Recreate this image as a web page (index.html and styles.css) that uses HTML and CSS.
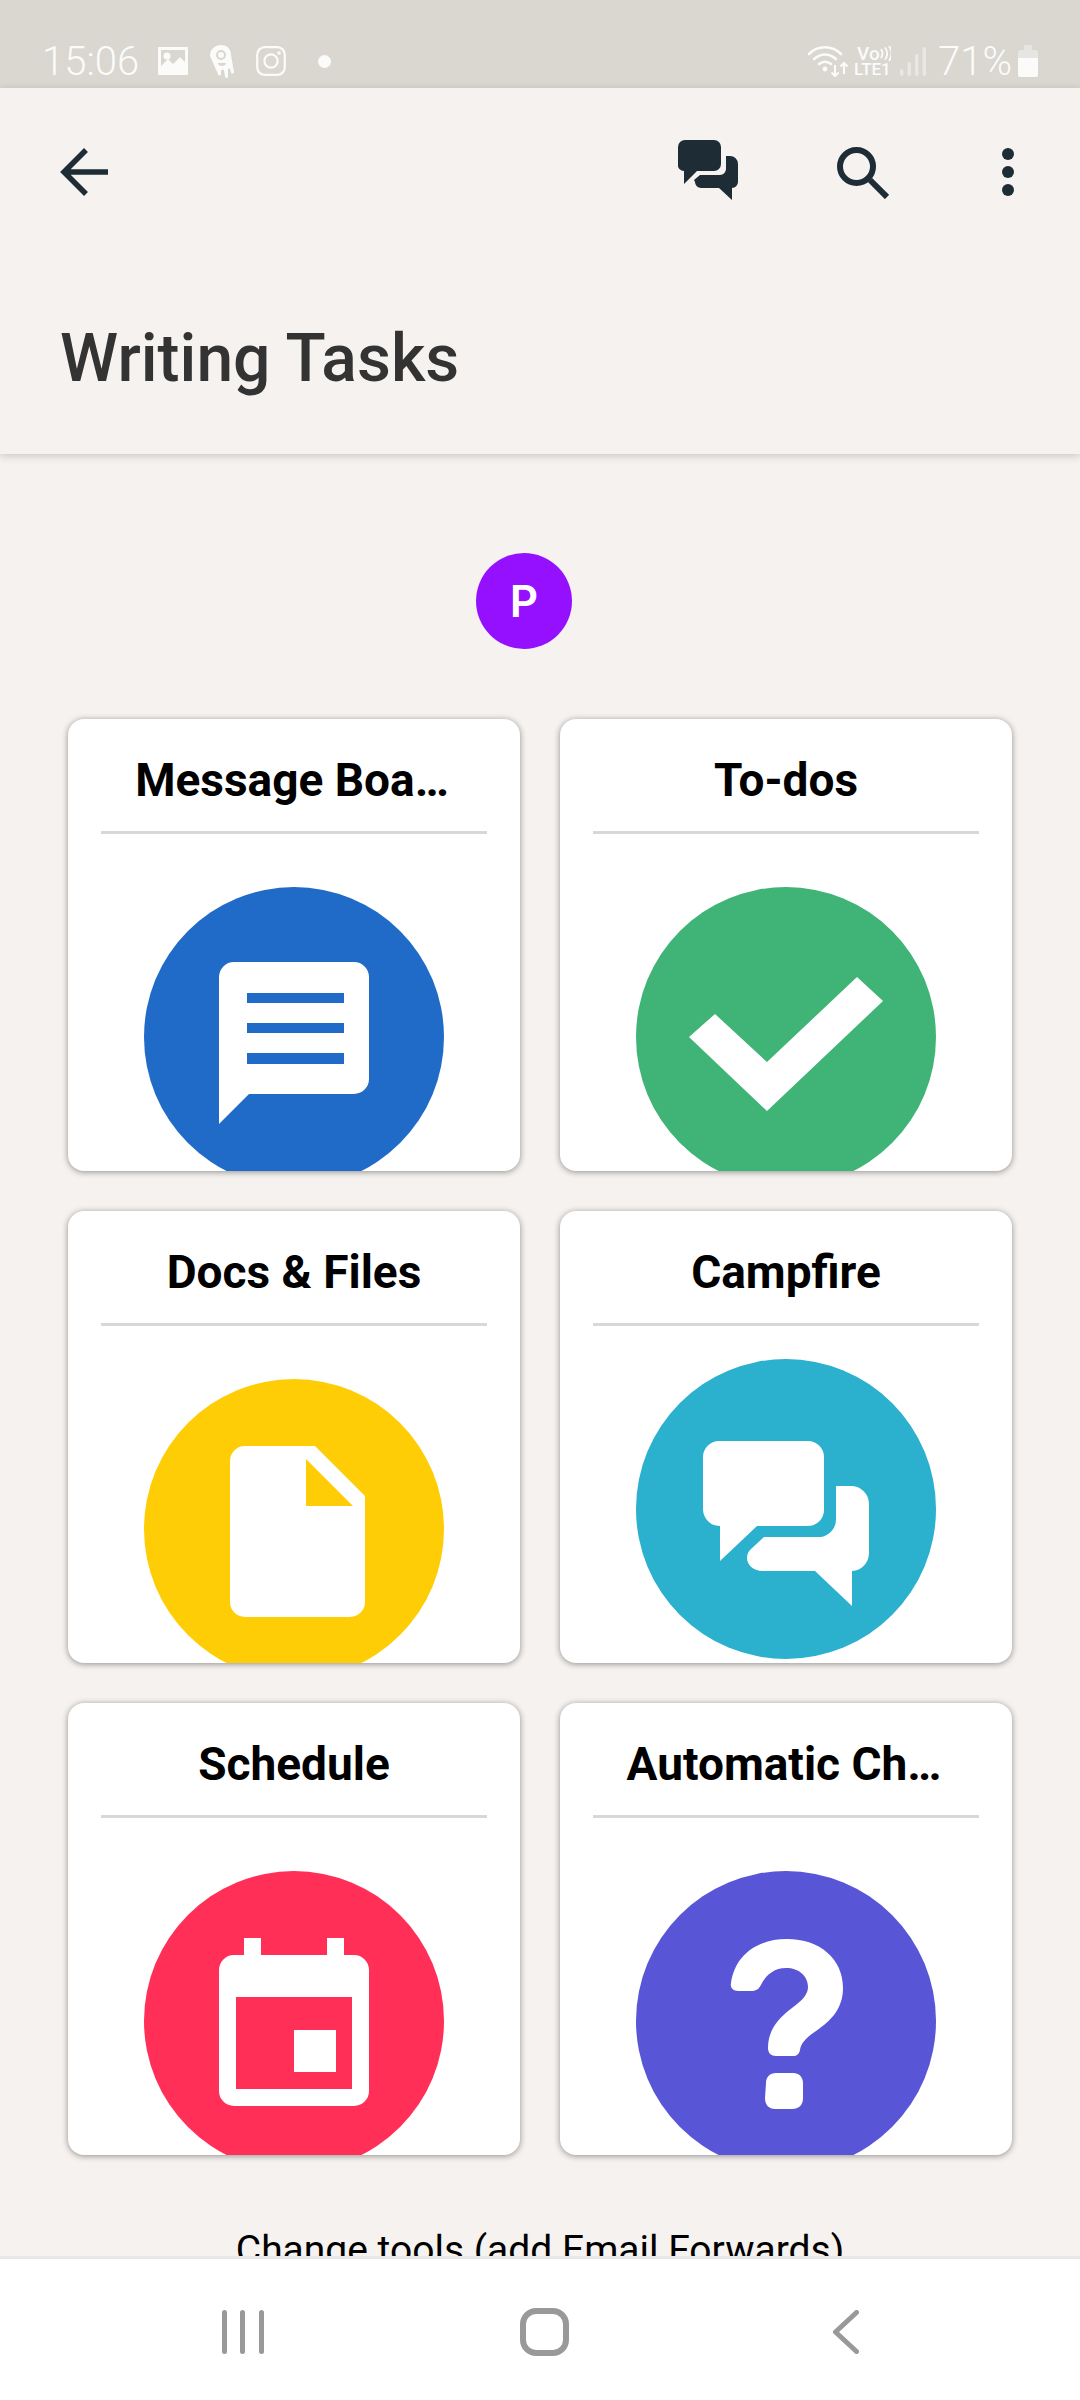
FILE: index.html
```html
<!DOCTYPE html>
<html lang="en">
<head>
  <meta charset="UTF-8">
  <meta name="viewport" content="width=device-width, initial-scale=1.0">
  <title>Writing Tasks</title>
  <link rel="stylesheet" href="styles.css">
</head>
<body>
  <div class="statusbar">
    <span class="clock">15:06</span>
    <svg class="st-image" width="30" height="28" viewBox="0 0 30 28">
      <path fill="#fbfbfa" fill-rule="evenodd" d="M1 0h28a1 1 0 0 1 1 1v26a1 1 0 0 1-1 1H1a1 1 0 0 1-1-1V1a1 1 0 0 1 1-1zM3 3v16l7-7 5 5 7-7 5 5V3z"/>
      <circle cx="9" cy="9" r="3.5" fill="#fbfbfa"/>
    </svg>
    <svg class="st-ghost" width="24" height="33" viewBox="0 0 24 33">
      <path fill="#fbfbfa" d="M0 11C0 4 5 0 11 0c6 0 10 4 10 10l3 17c0 2-3 2-3 0l-1-3c-1-1-2-1-2 1v6c0 3-3 3-3 0l-1-5c0-2-2-2-3 0v3c0 2-3 2-3 0z"/>
      <circle cx="11" cy="10" r="4" fill="none" stroke="#d9d7d0" stroke-width="2"/>
      <path fill="#d9d7d0" d="M8 18h8c0 4-8 4-8 0z"/>
    </svg>
    <svg class="st-insta" width="30" height="30" viewBox="0 0 30 30">
      <rect x="1.2" y="1.2" width="27.6" height="27.6" rx="7.5" fill="none" stroke="#fbfbfa" stroke-width="2.2"/>
      <circle cx="15" cy="15" r="6.6" fill="none" stroke="#fbfbfa" stroke-width="2.2"/>
      <circle cx="23" cy="7" r="1.8" fill="#fbfbfa"/>
    </svg>
    <span class="st-dot"></span>
    <div class="st-right">
      <svg width="40" height="32" viewBox="0 0 40 32">
        <g fill="none" stroke="#fbfbfa" stroke-width="2.6" stroke-linecap="round">
          <path d="M1 9C10 0 24 0 33 9"/>
          <path d="M6 14c7-6 15-6 22 0"/>
          <path d="M11 19c4-3 8-3 12 0"/>
        </g>
        <circle cx="17" cy="24" r="2.4" fill="#fbfbfa"/>
        <path fill="none" stroke="#fbfbfa" stroke-width="2" d="M27 20v11m-3.500-3.500l3.500 3.500 3.500-3.500M36 29V18m-3.500 3.500L36 18l3.500 3.500"/>
      </svg>
      <div class="volte">
        <div class="vo">Vo<svg width="11" height="15" viewBox="0 0 11 15"><path fill="none" stroke="#fbfbfa" stroke-width="1.8" d="M1 3c2 3 2 6 0 9M5 1.500c3 4 3 8 0 12M9 0c3.500 5 3.500 10 0 15"/></svg></div>
        <div class="lte">LTE1</div>
      </div>
      <svg class="st-signal" width="26" height="30" viewBox="0 0 26 30">
        <g fill="#fbfbfa" opacity=".45">
          <rect x="0" y="23" width="3.500" height="7" rx="1.700"/>
          <rect x="7.500" y="16" width="3.500" height="14" rx="1.700"/>
          <rect x="15" y="8" width="3.500" height="22" rx="1.700"/>
          <rect x="22.500" y="1" width="3.500" height="29" rx="1.700"/>
        </g>
      </svg>
      <span class="battery-pct">71%</span>
      <svg width="20" height="32" viewBox="0 0 20 32">
        <path fill="#fbfbfa" opacity=".4" d="M6 0h8v5h4a2 2 0 0 1 2 2v6H0V7a2 2 0 0 1 2-2h4z"/>
        <path fill="#fbfbfa" d="M0 13h20v17a2 2 0 0 1-2 2H2a2 2 0 0 1-2-2z"/>
      </svg>
    </div>
  </div>

  <div class="header">
    <div class="toolbar">
      <svg class="back" width="48" height="48" viewBox="0 0 48 48">
        <path fill="none" stroke="#1d2c35" stroke-width="5.500" d="M48 24H5M26 2L4 24l22 22"/>
      </svg>
      <div class="toolbar-right">
        <svg class="tb-chat" width="60" height="60" viewBox="0 0 60 60">
          <path fill="#1d2c35" d="M7 0h29a7 7 0 0 1 7 7v17a7 7 0 0 1-7 7H19L6 44V31a6 6 0 0 1-6-7V7a7 7 0 0 1 7-7z"/>
          <path fill="#1d2c35" d="M48 16h4a8 8 0 0 1 8 8v18a6 6 0 0 1-6 6v12L41 48H23a6 6 0 0 1-6-6l-1-2 6-5h20a6 6 0 0 0 6-6z"/>
        </svg>
        <svg class="tb-search" width="52" height="52" viewBox="0 0 52 52">
          <circle cx="19.500" cy="19.500" r="16.500" fill="none" stroke="#1d2c35" stroke-width="6"/>
          <path fill="none" stroke="#1d2c35" stroke-width="6" d="M33 33l17 17"/>
        </svg>
        <svg class="tb-more" width="12" height="48" viewBox="0 0 12 48">
          <circle cx="6" cy="6" r="6" fill="#1d2c35"/>
          <circle cx="6" cy="24" r="6" fill="#1d2c35"/>
          <circle cx="6" cy="42" r="6" fill="#1d2c35"/>
        </svg>
      </div>
    </div>
    <h1>Writing Tasks</h1>
  </div>

  <div class="content">
    <div class="avatar">P</div>
    <div class="tools">
      <div class="card">
        <div class="card-title cut">Message Boa…</div>
        <svg class="card-icon" viewBox="0 0 300 300">
          <circle cx="150" cy="150" r="150" fill="#1f6bc7"/>
          <path fill="#fff" d="M90 75h120a15 15 0 0 1 15 15v102a15 15 0 0 1-15 15H105l-30 30V90a15 15 0 0 1 15-15z"/>
          <path fill="#1f6bc7" d="M103 106h97v10h-97zM103 136h97v10h-97zM103 166h97v11h-97z"/>
        </svg>
      </div>
      <div class="card">
        <div class="card-title">To-dos</div>
        <svg class="card-icon" viewBox="0 0 300 300">
          <circle cx="150" cy="150" r="150" fill="#40b476"/>
          <path fill="#fff" d="M53 150l26-23 52 48 90-85 26 24-116 110z"/>
        </svg>
      </div>
      <div class="card">
        <div class="card-title">Docs &amp; Files</div>
        <svg class="card-icon" viewBox="0 0 300 300">
          <circle cx="150" cy="150" r="150" fill="#ffcd05"/>
          <path fill="#fff" d="M101 67h70l50 50v106a15 15 0 0 1-15 15H101a15 15 0 0 1-15-15V82a15 15 0 0 1 15-15z"/>
          <path fill="#ffcd05" d="M162 80v47h47z"/>
        </svg>
      </div>
      <div class="card">
        <div class="card-title">Campfire</div>
        <svg class="card-icon card-icon-high" viewBox="0 0 300 300">
          <circle cx="150" cy="150" r="150" fill="#2bb0cd"/>
          <path fill="#fff" d="M83 82h89a16 16 0 0 1 16 16v53a16 16 0 0 1-16 16h-51l-37 35v-35a17 17 0 0 1-17-16V98a16 16 0 0 1 16-16z"/>
          <path fill="#fff" d="M200 127h15a18 18 0 0 1 18 18v49a18 18 0 0 1-17 18v35l-37-35h-52c-16 0-20-15-12-22l13-12h57a18 18 0 0 0 15-18z"/>
        </svg>
      </div>
      <div class="card">
        <div class="card-title">Schedule</div>
        <svg class="card-icon" viewBox="0 0 300 300">
          <circle cx="150" cy="150" r="150" fill="#ff2f58"/>
          <path fill="#fff" d="M100 67h17v17h66V67h17v17h10a15 15 0 0 1 15 15v121a15 15 0 0 1-15 15H90a15 15 0 0 1-15-15V99a15 15 0 0 1 15-15h10z"/>
          <path fill="#ff2f58" d="M92 126h116v92H92z"/>
          <path fill="#fff" d="M150 159h42v42h-42z"/>
        </svg>
      </div>
      <div class="card">
        <div class="card-title cut">Automatic Ch…</div>
        <svg class="card-icon" viewBox="0 0 300 300">
          <circle cx="150" cy="150" r="150" fill="#5856d6"/>
          <path fill="#fff" d="M95 112C99 84 121 68 151 68c33 0 56 20 56 49 0 20-11 32-27 43-10 7-15 12-16 19-1 4-3 6-7 6h-17c-5 0-8-3-8-8 0-16 8-28 24-40 11-8 16-14 16-21 0-11-9-19-22-19-11 0-19 6-24 15-3 6-5 8-11 8h-13c-5 0-8-3-7-8z"/>
          <path fill="#fff" d="M140 202h17c6 0 10 4 10 10v15c0 7-4 11-11 11h-17c-6 0-10-4-10-11l1-15c0-6 4-10 10-10z"/>
        </svg>
      </div>
    </div>
    <div class="change-tools">Change tools (add Email Forwards)</div>
  </div>

  <div class="navbar">
    <svg width="42" height="44" viewBox="0 0 42 44">
      <g fill="#999">
        <rect x="0" y="0" width="5" height="44" rx="2.500"/>
        <rect x="18" y="0" width="5" height="44" rx="2.500"/>
        <rect x="37" y="0" width="5" height="44" rx="2.500"/>
      </g>
    </svg>
    <svg class="nav-home" width="49" height="48" viewBox="0 0 49 48">
      <rect x="3" y="3" width="43" height="42" rx="13" fill="none" stroke="#999" stroke-width="6"/>
    </svg>
    <svg width="26" height="44" viewBox="0 0 26 44">
      <path fill="none" stroke="#999" stroke-width="5" stroke-linecap="round" stroke-linejoin="round" d="M23.500 2.500L2.500 22l21 19.500" />
    </svg>
  </div>
</body>
</html>
```

FILE: styles.css
```css
html, body {
  margin: 0;
  height: 100%;
}
body {
  font-family: Roboto, 'Noto Sans', sans-serif;
  background-color: #f5f2ef;
  display: flex;
  flex-direction: column;
  height: 2400px;
  overflow: hidden;
}
svg {
  display: block;
  flex: none;
}

/* status bar */
.statusbar {
  height: 88px;
  box-sizing: border-box;
  padding: 34px 42px 0 42px;
  background-color: #d9d7d0;
  color: #fbfbfa;
  display: flex;
  align-items: center;
  flex: none;
}
.clock {
  font-size: 40px;
  font-weight: 300;
  width: 97px;
  margin-right: 19px;
}
.st-ghost,
.st-insta {
  margin-left: 22px;
}
.st-dot {
  width: 13px;
  height: 13px;
  border-radius: 50%;
  background-color: #fbfbfa;
  margin-left: 32px;
}
.st-right {
  margin-left: auto;
  display: flex;
  align-items: center;
}
.volte {
  width: 38px;
  margin-left: 6px;
  font-weight: 500;
}
.vo {
  display: flex;
  align-items: center;
  padding-left: 3px;
  font-size: 19px;
  line-height: 17px;
}
.lte {
  font-size: 17px;
  line-height: 15px;
}
.st-signal {
  margin-left: 8px;
}
.battery-pct {
  font-size: 40px;
  font-weight: 300;
  margin: 0 6px 0 12px;
}

/* header */
.header {
  height: 366px;
  flex: none;
  background-color: #f5f2ef;
  box-shadow: 0 2px 8px rgba(0, 0, 0, 0.18);
  position: relative;
}
.toolbar {
  height: 168px;
  padding: 0 66px 0 60px;
  display: flex;
  align-items: center;
  justify-content: space-between;
}
.toolbar-right {
  display: flex;
  align-items: center;
}
.tb-chat {
  margin-right: 99px;
  margin-top: -4px;
}
.tb-search {
  margin-right: 113px;
  margin-top: 2px;
}
.header h1 {
  margin: 0;
  padding: 67px 0 0 60px;
  font-size: 66px;
  font-weight: 500;
  line-height: 72px;
  color: #333333;
}

/* tools */
.content {
  flex: 1;
  overflow: hidden;
  padding: 99px 68px 0;
}
.avatar {
  width: 96px;
  height: 96px;
  margin-left: 408px;
  border-radius: 50%;
  background-color: #9510fe;
  color: #ffffff;
  font-family: Inter, Roboto, sans-serif;
  font-size: 44px;
  font-weight: 600;
  display: flex;
  align-items: center;
  justify-content: center;
}
.tools {
  margin-top: 70px;
  display: grid;
  grid-template-columns: 452px 452px;
  gap: 40px;
}
.card {
  height: 452px;
  background-color: #ffffff;
  border-radius: 16px;
  box-shadow: 0 1px 6px rgba(0, 0, 0, 0.42);
  overflow: hidden;
}
.card-title {
  margin: 0 33px;
  padding: 33px 0 23px;
  border-bottom: 3px solid #d8d8d8;
  font-size: 46px;
  font-weight: 700;
  line-height: 56px;
  text-align: center;
  color: #000000;
}
.card-title.cut {
  padding-right: 4px;
}
.card-icon {
  width: 300px;
  height: 300px;
  margin: 53px auto 0;
}
.card-icon-high {
  margin-top: 33px;
}
.change-tools {
  margin-top: 72px;
  font-size: 39px;
  line-height: 46px;
  text-align: center;
  color: #000000;
}

/* bottom navigation */
.navbar {
  height: 144px;
  flex: none;
  box-sizing: border-box;
  border-top: 3px solid #e9e8e8;
  background-color: #ffffff;
  position: relative;
  display: flex;
  align-items: center;
  padding: 5px 221px 0 222px;
  justify-content: space-between;
}
.nav-home {
  margin-left: -8px;
}
```
